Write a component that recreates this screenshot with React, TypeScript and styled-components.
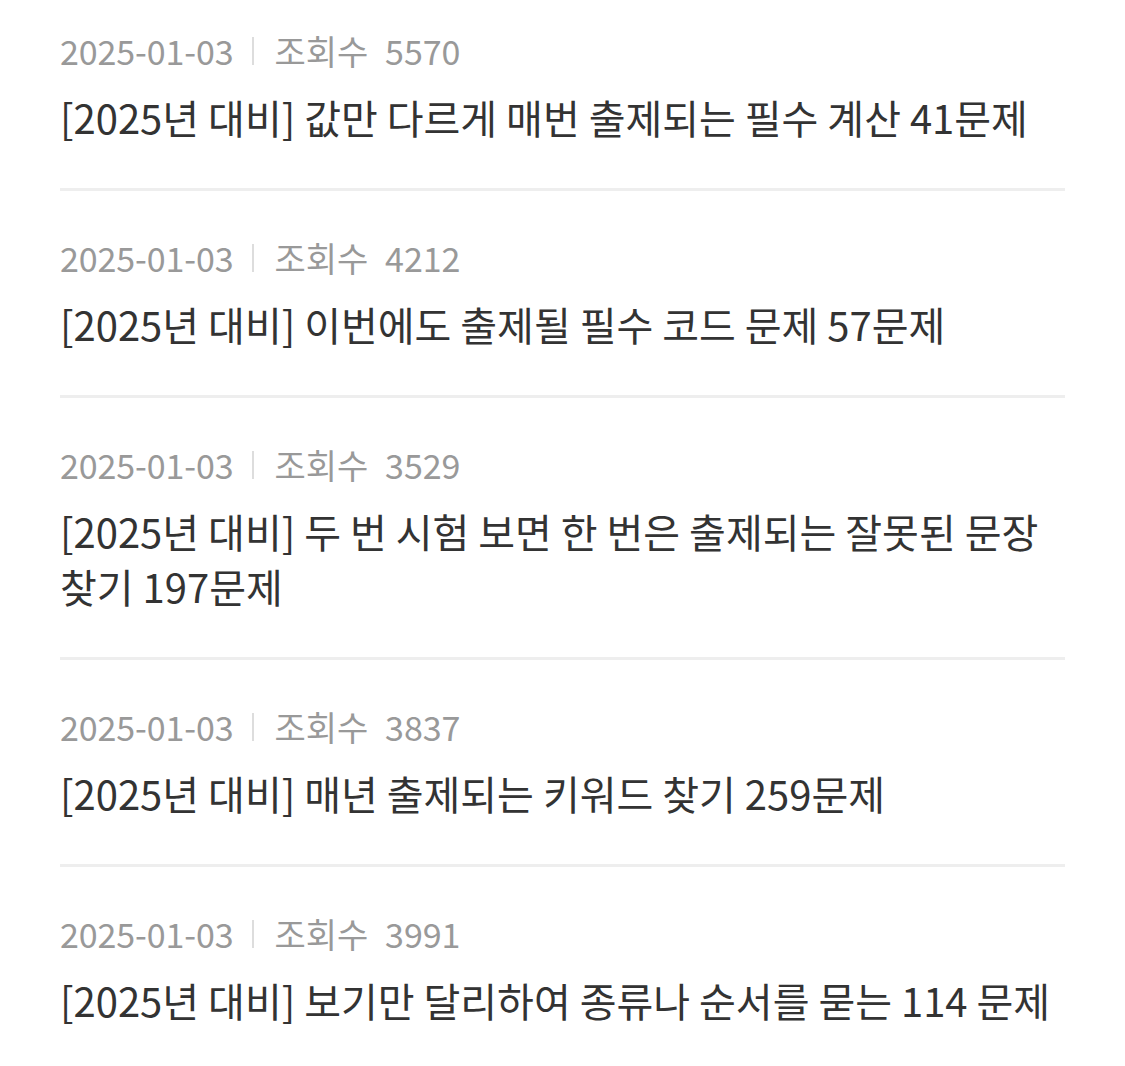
import styled, { createGlobalStyle } from "styled-components";

type Post = {
  date: string;
  views: number;
  title: string;
};

const posts: Post[] = [
  {
    date: "2025-01-03",
    views: 5570,
    title: "[2025년 대비] 값만 다르게 매번 출제되는 필수 계산 41문제",
  },
  {
    date: "2025-01-03",
    views: 4212,
    title: "[2025년 대비] 이번에도 출제될 필수 코드 문제 57문제",
  },
  {
    date: "2025-01-03",
    views: 3529,
    title:
      "[2025년 대비] 두 번 시험 보면 한 번은 출제되는 잘못된 문장 찾기 197문제",
  },
  {
    date: "2025-01-03",
    views: 3837,
    title: "[2025년 대비] 매년 출제되는 키워드 찾기 259문제",
  },
  {
    date: "2025-01-03",
    views: 3991,
    title: "[2025년 대비] 보기만 달리하여 종류나 순서를 묻는 114 문제",
  },
];

const GlobalStyle = createGlobalStyle`
  html, body {
    margin: 0;
    padding: 0;
    background: #fff;
  }
  body {
    font-family: "Noto Sans CJK KR", "Noto Sans", sans-serif;
  }
`;

const List = styled.ul`
  list-style: none;
  margin: 0;
  padding: 0 60px;
`;

const Item = styled.li`
  padding: 45px 0 43px;
  border-bottom: 3px solid #eeeeee;

  &:first-child {
    padding-top: 29px;
  }

  &:last-child {
    border-bottom: none;
  }
`;

const Meta = styled.div`
  display: flex;
  align-items: center;
  height: 44px;
  font-size: 34px;
  line-height: 44px;
  color: #999999;
  letter-spacing: -0.1px;
`;

const Divider = styled.span`
  display: inline-block;
  width: 2px;
  height: 28px;
  margin: 0 21px 0 18px;
  background: #dddddd;
`;

const Views = styled.span`
  margin-left: 17px;
`;

const Title = styled.h3`
  margin: 17px 0 0;
  font-size: 40px;
  font-weight: 400;
  line-height: 55px;
  color: #333333;
  word-break: keep-all;
`;

export default function App() {
  return (
    <>
      <GlobalStyle />
      <List>
        {posts.map((post, i) => (
          <Item key={i}>
            <Meta>
              <span>{post.date}</span>
              <Divider />
              <span>조회수</span>
              <Views>{post.views}</Views>
            </Meta>
            <Title>{post.title}</Title>
          </Item>
        ))}
      </List>
    </>
  );
}
